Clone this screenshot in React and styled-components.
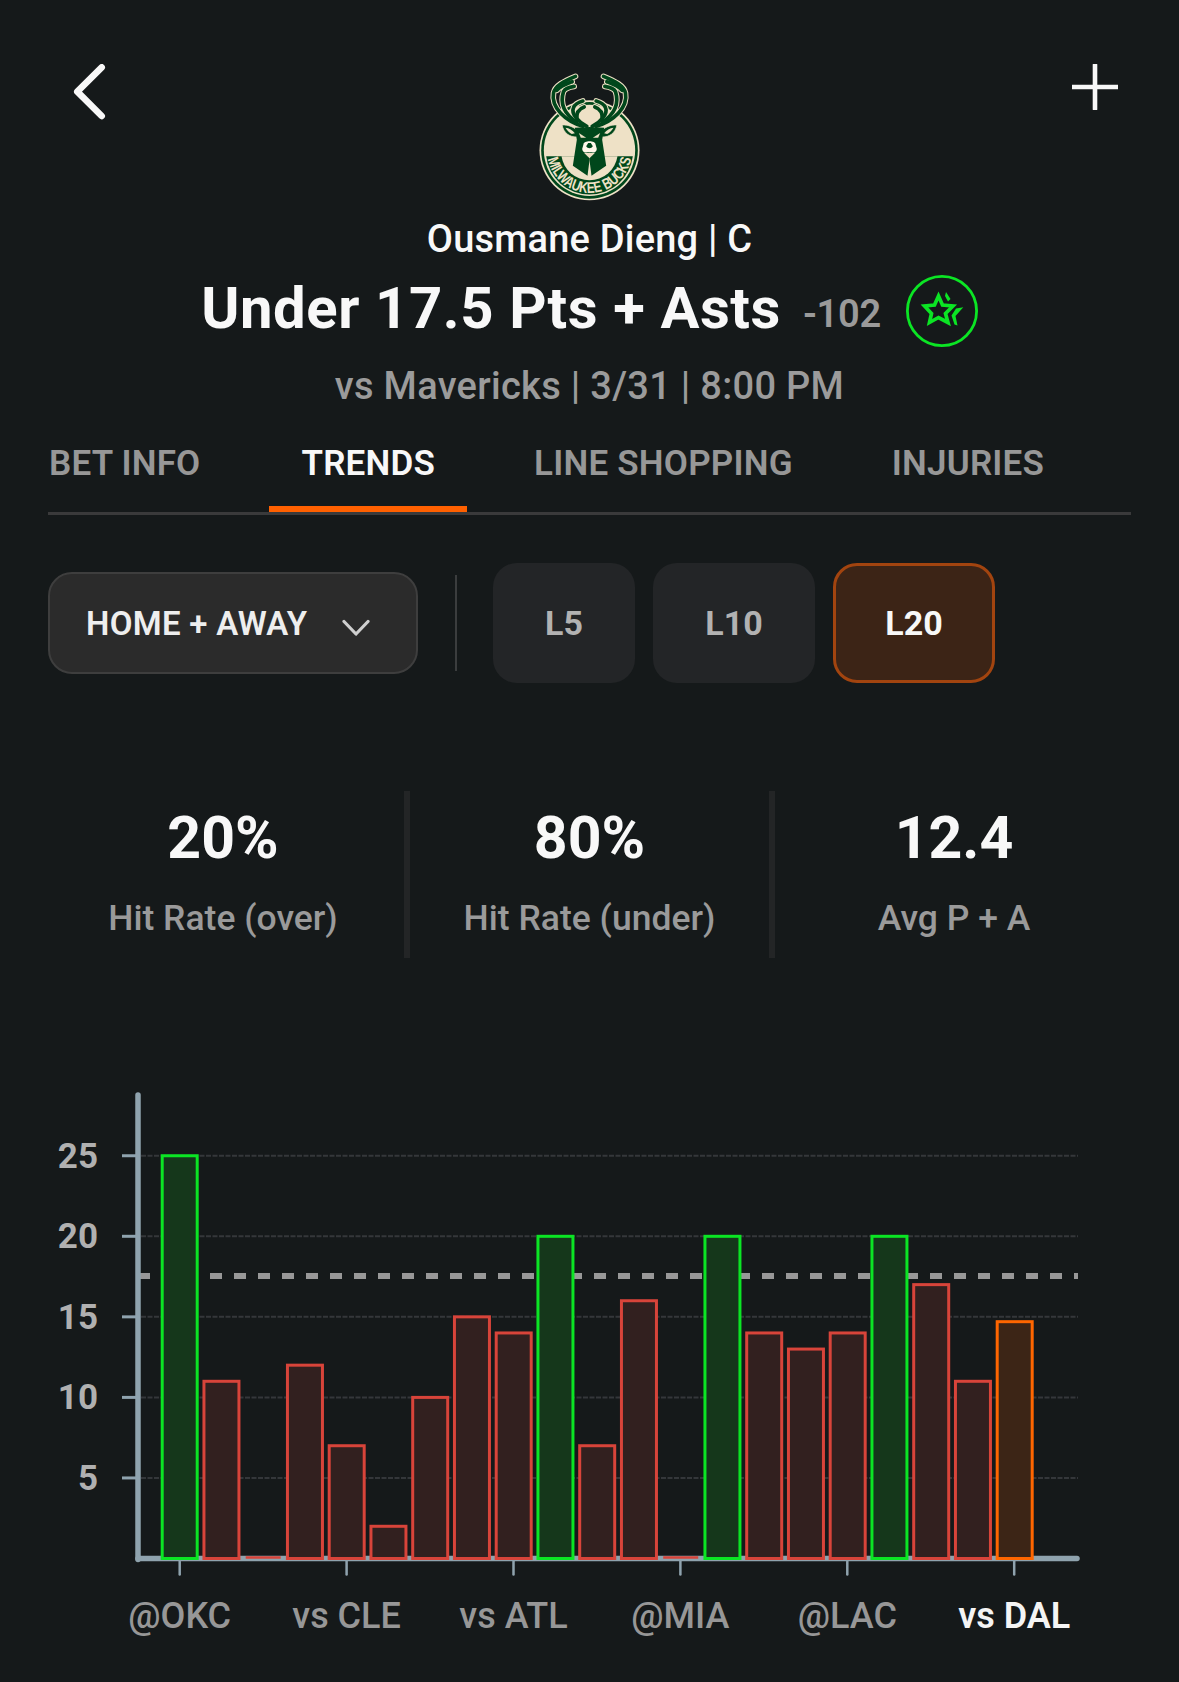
import React from "react";
import styled, { createGlobalStyle } from "styled-components";

const Global = createGlobalStyle`
  html, body { margin: 0; padding: 0; background: #15191a; }
  * { box-sizing: border-box; }
`;

const Page = styled.div`
  width: 1179px;
  height: 1682px;
  overflow: hidden;
  background: #15191a;
  font-family: Roboto, "Open Sans", sans-serif;
  color: #f8f8f8;
`;

const TopBar = styled.header`
  display: grid;
  grid-template-columns: 1fr auto 1fr;
  height: 204px;
  padding: 64px 61px 0 72px;
`;
const IconBtn = styled.div`
  display: flex;
  justify-content: ${(p) => (p.$end ? "flex-end" : "flex-start")};
  align-items: flex-start;
`;
const LogoSlot = styled.div`
  padding-top: 8px;
  margin-right: 11px;
`;

const PlayerName = styled.div`
  margin-top: 13px;
  text-align: center;
  font-size: 38px;
  font-weight: 500;
  line-height: 44px;
  letter-spacing: 0.2px;
`;
const TitleRow = styled.div`
  margin-top: 11px;
  height: 72px;
  display: flex;
  justify-content: center;
  align-items: center;
`;
const Title = styled.h1`
  margin: 0;
  font-size: 58px;
  font-weight: 700;
  line-height: 72px;
  letter-spacing: 0.6px;
`;
const Odds = styled.span`
  margin: 12px 25px 0 22px;
  font-size: 38px;
  font-weight: 600;
  color: #9a9a9a;
  letter-spacing: -0.3px;
`;
const Badge = styled.div`
  margin-top: 6px;
  height: 72px;
`;
const Sub = styled.div`
  margin-top: 20px;
  text-align: center;
  font-size: 38px;
  font-weight: 500;
  line-height: 44px;
  color: #9b9b9b;
  letter-spacing: 0.3px;
`;

const Content = styled.div`
  padding: 0 48px;
`;
const Tabs = styled.nav`
  margin-top: 30px;
  display: flex;
  gap: 35px;
  height: 77px;
  border-bottom: 3px solid #3a3a3b;
`;
const Tab = styled.div`
  height: 74px;
  padding: ${(p) => (p.$first ? "0 34px 18px 1px" : "0 32px 18px")};
  display: flex;
  align-items: center;
  font-size: 35px;
  font-weight: 600;
  letter-spacing: 0.2px;
  color: ${(p) => (p.$active ? "#f8f8f8" : "#979797")};
  border-bottom: ${(p) => (p.$active ? "6px solid #ff6000" : "6px solid transparent")};
`;

const Filters = styled.div`
  margin-top: 48px;
  height: 120px;
  display: flex;
  align-items: center;
`;
const Dropdown = styled.div`
  width: 370px;
  height: 102px;
  padding: 0 46px 0 36px;
  display: flex;
  align-items: center;
  justify-content: space-between;
  background: #2b2b2b;
  border: 2px solid #3e3e3e;
  border-radius: 24px;
  font-size: 33px;
  font-weight: 600;
  letter-spacing: 0.3px;
  color: #eeeeee;
`;
const DropIcon = styled.span`
  display: flex;
  margin-top: 10px;
`;
const VDivider = styled.div`
  width: 2px;
  height: 96px;
  margin: 0 36px 0 37px;
  background: #3b3d3e;
`;
const Ranges = styled.div`
  display: flex;
  gap: 18px;
`;
const Range = styled.div`
  width: ${(p) => p.$w}px;
  height: 120px;
  display: flex;
  align-items: center;
  justify-content: center;
  border-radius: 24px;
  font-size: 34px;
  font-weight: 700;
  background: ${(p) => (p.$active ? "#3c2416" : "#232527")};
  border: ${(p) => (p.$active ? "3px solid #a2440f" : "none")};
  color: ${(p) => (p.$active ? "#f8f8f8" : "#b2b2b2")};
`;

const Stats = styled.section`
  margin: 108px 0 0 -6px;
  height: 167px;
  display: grid;
  grid-template-columns: 362px 6px 359px 6px 358px;
`;
const Stat = styled.div`
  text-align: center;
  padding-top: 12px;
`;
const StatRule = styled.div`
  background: #232526;
`;
const StatValue = styled.div`
  font-size: 59px;
  font-weight: 700;
  line-height: 70px;
`;
const StatLabel = styled.div`
  margin-top: 23px;
  font-size: 35.5px;
  font-weight: 500;
  line-height: 44px;
  color: #9a9a9a;
`;

const ChartSvg = styled.svg`
  display: block;
  margin-top: 127px;
`;

const AXIS = "#8fa3ae";
const Y0 = 1558.5 - 1085;
const STEP = 16.11;
const BAR_W = 35;
const bars = [25, 11, 0, 12, 7, 2, 10, 15, 14, 20, 7, 16, 0, 20, 14, 13, 14, 20, 17, 11, 14.7];
const xTicks = ["@OKC", "vs CLE", "vs ATL", "@MIA", "@LAC", "vs DAL"];
const yTicks = [25, 20, 15, 10, 5];

const barStyle = (v, i) => {
  if (i === bars.length - 1) return { stroke: "#ff6600", fill: "#3c2516" };
  if (v > 17.5) return { stroke: "#0be524", fill: "#15371b" };
  return { stroke: "#d8443a", fill: "#32201f" };
};

function Chart() {
  return (
    <ChartSvg width="1179" height="590" viewBox="0 0 1179 590">
      {yTicks.map((t) => {
        const y = Y0 - t * STEP;
        return (
          <g key={t}>
            <line x1="141" x2="1078" y1={y} y2={y} stroke="#34373a" strokeWidth="2" strokeDasharray="5 1.5" />
            <line x1="122" x2="138" y1={y} y2={y} stroke={AXIS} strokeWidth="3" />
            <text x="98" y={y + 12} textAnchor="end" fontFamily="Roboto, sans-serif" fontSize="35" fontWeight="700" fill="#b0b0b0">{t}</text>
          </g>
        );
      })}
      <line x1="138" x2="1078" y1={Y0 - 17.5 * STEP - 0.5} y2={Y0 - 17.5 * STEP - 0.5} stroke="#989898" strokeWidth="6" strokeDasharray="12 12" />
      <line x1="138" x2="138" y1="10" y2={Y0 + 1} stroke={AXIS} strokeWidth="5.5" strokeLinecap="round" />
      <line x1="138" x2="1077" y1={Y0} y2={Y0} stroke={AXIS} strokeWidth="5.5" strokeLinecap="round" />
      {xTicks.map((t, i) => {
        const x = 179.7 + i * 166.9;
        return (
          <g key={t}>
            <line x1={x} x2={x} y1={Y0 + 3} y2={Y0 + 16} stroke={AXIS} strokeWidth="2.5" strokeLinecap="round" />
            <text x={x} y="543" textAnchor="middle" fontFamily="Roboto, sans-serif" fontSize="36" fontWeight={i === 5 ? 600 : 500} fill={i === 5 ? "#f4f4f4" : "#979797"}>{t}</text>
          </g>
        );
      })}
      {bars.map((v, i) => {
        const x = 162.2 + i * 41.75;
        const s = barStyle(v, i);
        const h = v * STEP;
        if (v === 0) return <line key={i} x1={x} x2={x + BAR_W} y1={Y0 - 1} y2={Y0 - 1} stroke={s.stroke} strokeWidth="2.5" />;
        return <rect key={i} x={x} y={Y0 - h} width={BAR_W} height={h} fill={s.fill} stroke={s.stroke} strokeWidth="3" />;
      })}
    </ChartSvg>
  );
}

function Antlers() {
  const paths = [
    "M310 228 C258 212 214 172 222 128 C226 106 254 92 288 78",
    "M232 120 C244 106 262 100 278 94",
    "M292 216 C262 196 238 168 252 124 C256 116 270 110 284 108",
    "M322 228 C296 214 274 190 282 172 C286 162 296 156 310 152",
    "M292 206 C290 188 298 176 314 170",
  ];
  return (
    <g fill="none" strokeLinecap="round" strokeLinejoin="round">
      {paths.map((d) => <path key={d} d={d} stroke="#eee1c6" strokeWidth="17" />)}
      {paths.map((d) => <path key={d + "g"} d={d} stroke="#00471b" strokeWidth="11" />)}
    </g>
  );
}

function HeadHalf() {
  return (
    <g>
      <path d="M248 224 C266 222 286 232 298 244 L292 260 C270 260 252 248 248 224 Z" fill="#00471b" stroke="#eee1c6" strokeWidth="2" />
      <path d="M258 232 C268 233 280 240 286 249 L277 251 C270 247 263 240 258 232 Z" fill="#eee1c6" />
      <path d="M332 230 L286 232 L292 268 L280 346 L324 376 L330 330 Z" fill="#00471b" />
      <path d="M298 248 L320 262 L304 262 Z" fill="#eee1c6" />
    </g>
  );
}

function BucksLogo() {
  return (
    <svg width="107" height="130" viewBox="170 65 320 390" aria-label="Milwaukee Bucks">
      <defs>
        <path id="bucksArc" d="M203.3 318 A128 128 0 0 0 456.7 318" />
      </defs>
      <circle cx="330" cy="300" r="150" fill="#eee1c6" />
      <circle cx="330" cy="300" r="145" fill="#00471b" />
      <circle cx="330" cy="300" r="137" fill="#eee1c6" />
      <path d="M200 318 L460 318 A131 131 0 0 1 200 318 Z" fill="#00471b" />
      <path d="M246 318 L414 318 A85 85 0 0 1 246 318 Z" fill="#eee1c6" />
      <Antlers />
      <g transform="translate(660 0) scale(-1 1)"><Antlers /></g>
      <HeadHalf />
      <g transform="translate(660 0) scale(-1 1)"><HeadHalf /></g>
      <path d="M312 282 C312 270 348 270 348 282 L352 296 C350 310 340 306 330 306 C320 306 310 310 308 296 Z" fill="#fff8ea" />
      <path d="M320 288 C324 296 336 296 340 288 L334 278 L326 278 Z" fill="#00471b" />
      <path d="M314 308 L346 308 L330 324 Z" fill="#eee1c6" />
      <text fontFamily="'Liberation Sans', sans-serif" fontWeight="700" fontSize="46" fill="#eee1c6">
        <textPath href="#bucksArc" startOffset="8" textLength="350" lengthAdjust="spacingAndGlyphs">MILWAUKEE BUCKS</textPath>
      </text>
    </svg>
  );
}

function StarBadge() {
  return (
    <svg width="72" height="72" viewBox="0 0 72 72">
      <circle cx="36" cy="36" r="34.6" fill="none" stroke="#0be524" strokeWidth="2.8" />
      <path d="M32.5 21 L36.5 30 L47 31 L39.5 38.5 L42 47.5 L32.5 42.5 L23.5 47.5 L25.5 38.5 L18.5 31 L28.5 30 Z" fill="none" stroke="#0be524" strokeWidth="3.7" />
      <path d="M40 17 L44.5 24 L42 26.5 L39 21 Z" fill="#0be524" />
      <path d="M57.3 32.3 L50 33.5 L45.5 40.5 L48.5 49.5 L51.5 50.5 L49.5 41 Z" fill="#0be524" />
    </svg>
  );
}

function BackIcon() {
  return (
    <svg width="40" height="60" viewBox="0 0 40 60">
      <path d="M29.7 3.3 L5.3 27.7 L29.7 52" fill="none" stroke="#f8f8f8" strokeWidth="6.6" strokeLinecap="round" strokeLinejoin="round" />
    </svg>
  );
}

function PlusIcon() {
  return (
    <svg width="46" height="46" viewBox="0 0 46 46">
      <path d="M23 1 V45 M1 23 H45" fill="none" stroke="#f8f8f8" strokeWidth="4.6" strokeLinecap="round" />
    </svg>
  );
}

function Chevron() {
  return (
    <svg width="28" height="18" viewBox="0 0 28 18">
      <path d="M2 2.5 L14 15 L26 2.5" fill="none" stroke="#cfcfcf" strokeWidth="3.2" strokeLinecap="round" strokeLinejoin="round" />
    </svg>
  );
}

export default function App() {
  return (
    <Page>
      <Global />
      <TopBar>
        <IconBtn><BackIcon /></IconBtn>
        <LogoSlot><BucksLogo /></LogoSlot>
        <IconBtn $end><PlusIcon /></IconBtn>
      </TopBar>
      <PlayerName>Ousmane Dieng | C</PlayerName>
      <TitleRow>
        <Title>Under 17.5 Pts + Asts</Title>
        <Odds>-102</Odds>
        <Badge><StarBadge /></Badge>
      </TitleRow>
      <Sub>vs Mavericks | 3/31 | 8:00 PM</Sub>
      <Content>
        <Tabs>
          <Tab $first>BET INFO</Tab>
          <Tab $active>TRENDS</Tab>
          <Tab>LINE SHOPPING</Tab>
          <Tab>INJURIES</Tab>
        </Tabs>
        <Filters>
          <Dropdown>
            <span>HOME + AWAY</span>
            <DropIcon><Chevron /></DropIcon>
          </Dropdown>
          <VDivider />
          <Ranges>
            <Range $w={142}>L5</Range>
            <Range $w={162}>L10</Range>
            <Range $w={162} $active>L20</Range>
          </Ranges>
        </Filters>
        <Stats>
          <Stat><StatValue>20%</StatValue><StatLabel>Hit Rate (over)</StatLabel></Stat>
          <StatRule />
          <Stat><StatValue>80%</StatValue><StatLabel>Hit Rate (under)</StatLabel></Stat>
          <StatRule />
          <Stat><StatValue>12.4</StatValue><StatLabel>Avg P + A</StatLabel></Stat>
        </Stats>
      </Content>
      <Chart />
    </Page>
  );
}
